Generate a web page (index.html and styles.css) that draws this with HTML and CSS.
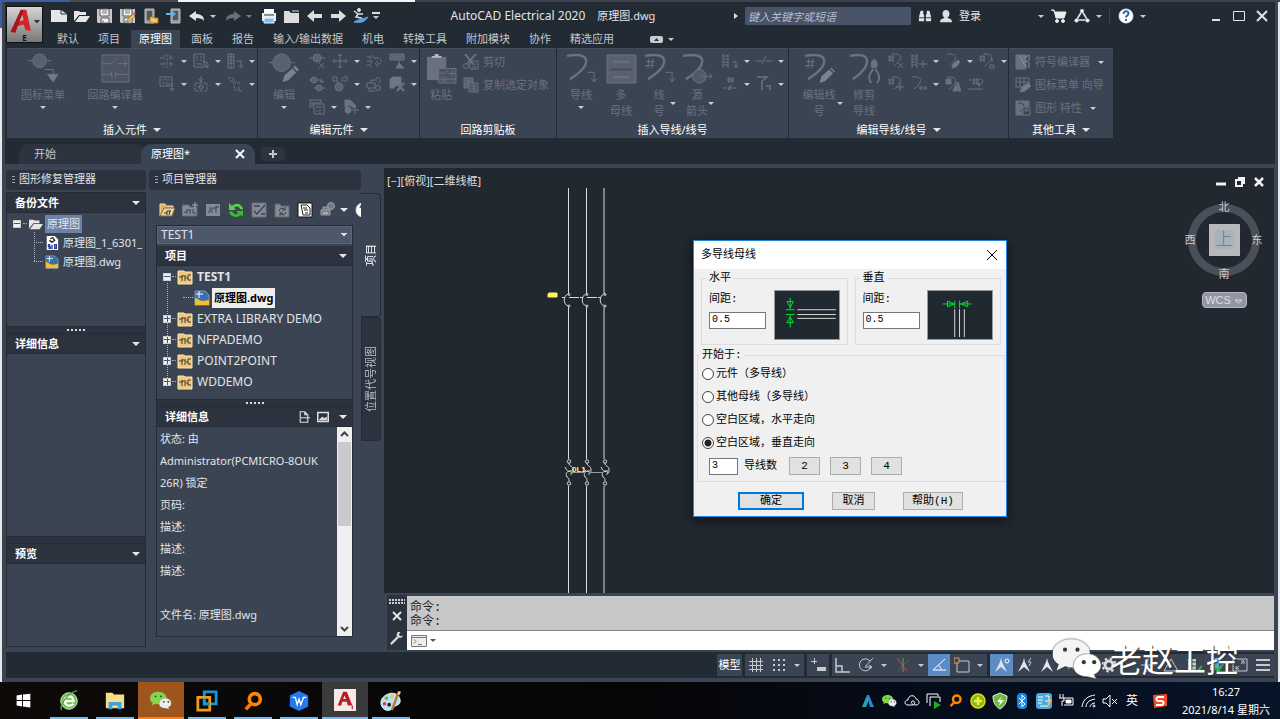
FILE: index.html
```html
<!DOCTYPE html>
<html lang="zh-CN">
<head>
<meta charset="utf-8">
<title>AutoCAD Electrical 2020 原理图.dwg</title>
<link rel="stylesheet" href="styles.css">
</head>
<body>
<svg class="sprite" aria-hidden="true">
  <symbol id="new" viewBox="0 0 16 16"><path d="M0 2h10l6 4v8H0z" fill="#e6e6e6" stroke="none"/><path d="M10 2v4h6" stroke="#222a33"/></symbol>
  <symbol id="open" viewBox="0 0 16 16"><path d="M0 13V3h5l1 1h6v3H5z M5.500 8H16l-4 6H1z" fill="#e6e6e6" stroke="none"/></symbol>
  <symbol id="save" viewBox="0 0 16 16"><path d="M0 1h15v14H1L0 14z" fill="#c9c9c9" stroke="none"/><path d="M3 1h9v7H3zM4 10h8v5H4z" fill="#f4f4f4" stroke="#555"/><path d="M5 3h5M5 5h5M6 12v3" stroke="#777"/></symbol>
  <symbol id="pencil" viewBox="0 0 16 16"><path d="M7 14l1-3 5-5 2 2-5 5z" fill="#f3bf55" stroke="#8a5a20" stroke-width=".6"/><path d="M13 5l2 2 1-2-1-1z" fill="#e33" stroke="none"/></symbol>
  <symbol id="device" viewBox="0 0 16 16"><path d="M2 1h9v14H2z" fill="#9a9a9a" stroke="#bbb"/><path d="M4 3h5v9H4z" fill="#555" stroke="none"/></symbol>
  <symbol id="undo" viewBox="0 0 16 16"><path d="M0 8l7-5v3c5 0 8 2 8 7-1-2-4-3-8-3v3z" fill="currentColor" stroke="none"/></symbol>
  <symbol id="print" viewBox="0 0 16 16"><path d="M3 1h10v5H3z" fill="#fff" stroke="none"/><path d="M1 5h14v8H1z" fill="#eee" stroke="none"/><path d="M3 7h10" stroke="#333"/><path d="M3 10h10v5H3z" fill="#7fc0ee" stroke="#e9f5ff"/></symbol>
  <symbol id="folder" viewBox="0 0 16 16"><path d="M0 3h5l2 2h8v10H0z" fill="#dcdcdc" stroke="none"/><path d="M8 3h7" stroke="#dcdcdc"/></symbol>
  <symbol id="arrow" viewBox="0 0 16 16"><path d="M0 8l7-6v4h8v4H7v4z" fill="#dedede" stroke="none"/></symbol>
  <symbol id="ski" viewBox="0 0 16 16"><circle cx="6" cy="2" r="1.500" fill="#ddd"/><path d="M1 3l4 3-2 3 5 1 3 2M5 6l5 0" stroke="#ddd" stroke-width="1.500"/><path d="M1 14c6 1 10 1 14-5-5 2-9 2-14 5z" fill="#5aa0d8" stroke="#5aa0d8"/></symbol>
  <symbol id="binoc" viewBox="0 0 16 16"><path d="M3 2h3v3l1 2v7H1V9zM10 2h3l2 7v5H9V7l1-2z" fill="#e4e4e4" stroke="none"/><path d="M1 10h6M9 10h6" stroke="#222a33"/></symbol>
  <symbol id="person" viewBox="0 0 16 16"><path d="M8 1c5 0 5 7 1.500 9l4.500 2 1 3H1l1-3 4.500-2C3 8 3 1 8 1z" fill="#dedede" stroke="none"/></symbol>
  <symbol id="cart" viewBox="0 0 16 16"><path d="M0 2h3l2 8h8l2-6H4" fill="#eee" stroke="#eee"/><circle cx="6" cy="13" r="1.500" fill="#eee"/><circle cx="12" cy="13" r="1.500" fill="#eee"/></symbol>
  <symbol id="tri" viewBox="0 0 16 16"><path d="M8 3L2.500 12h11z" stroke="#dfe4f5" stroke-width="1.600"/><g fill="#fff" stroke="#5363a8" stroke-width=".5"><circle cx="8" cy="3" r="2"/><circle cx="2.500" cy="12.500" r="2"/><circle cx="13.500" cy="12.500" r="2"/></g></symbol>

  <symbol id="comp" viewBox="0 0 32 32"><circle cx="12" cy="8" r="7" fill="#596170"/><path d="M0 8h5M19 8h5M17 17h9v8"/><path d="M20 22h11l-5 8z" fill="#737b88"/></symbol>
  <symbol id="circuit" viewBox="0 0 32 32"><path d="M2 2h28v28H2z" fill="#4c5462"/><path d="M2 11h10l6-6M18 11h12M26 8v6M2 22h10M12 19v6M16 19v6M16 22h14"/></symbol>
  <symbol id="edit" viewBox="0 0 32 32"><circle cx="13" cy="10" r="9" fill="#596170"/><path d="M0 10h4M22 10h5"/><path d="M14 30l2-7 8-7 4 4-8 8zM25 15l2-2 4 4-2 2z" fill="#7a828e" stroke="none"/></symbol>
  <symbol id="paste" viewBox="0 0 32 32"><path d="M1 4h20v24H1z" fill="#6a717d" stroke="none"/><path d="M6 5V3h3V1h4v2h3v2z" fill="#b8bcc2" stroke="none"/><path d="M13 16h18v15H13z" fill="#4b5361"/><path d="M13 21h6l4-3M23 21h8M27 18v5M13 27h5M18 25v5M20 25v5M20 27h11"/></symbol>
  <symbol id="wire" viewBox="0 0 32 32"><path d="M1 3c28-5 24 11 3 24" stroke-width="2.500"/><path d="M22 20h7v9M26 26l3 4 3-4"/></symbol>
  <symbol id="bus" viewBox="0 0 32 32"><path d="M1 2h30v29H1z" fill="#596170"/><path d="M8 9h16M8 25h16" stroke-width="2"/><path d="M5 17h22" stroke="#454d5b" stroke-width="2"/></symbol>
  <symbol id="wnum" viewBox="0 0 32 32"><path d="M1 3c28-5 24 11 3 24" stroke-width="2.500"/><path d="M2 9h9M1 13h9M5 6l-1 10M9 6l-1 10M22 20h7v9M26 26l3 4 3-4"/></symbol>
  <symbol id="source" viewBox="0 0 32 32"><path d="M1 3c28-5 24 11 3 24" stroke-width="2.500"/><circle cx="18" cy="24" r="7" fill="#535b69"/><path d="M20 24h11M28 21l3 3-3 3"/></symbol>
  <symbol id="wedit" viewBox="0 0 32 32"><path d="M1 3c28-5 24 11 3 24" stroke-width="2.500"/><path d="M2 9h9M1 13h9M5 6l-1 10M9 6l-1 10"/><path d="M16 31l2-7 8-7 4 4-8 8zM27 16l1-1 4 4-1 1z" fill="#7a828e" stroke="none"/></symbol>
  <symbol id="trim" viewBox="0 0 32 32"><path d="M1 3c24-5 22 11 3 24" stroke-width="2.500"/><path d="M25 16c-2-3-2-6 0-8v6h2V8c2 2 2 5 0 8M25 17c-5 5-5 10-2 14M27 17c5 5 5 10 2 14" stroke-width="2"/></symbol>

  <symbol id="s1" viewBox="0 0 16 16"><path d="M1 5h4M11 5h4M1 11h4M11 11h4M5 2v5M5 9v5M11 2v5M11 9v5M8 1v14" stroke-dasharray="3 1"/></symbol>
  <symbol id="s2" viewBox="0 0 16 16"><path d="M1 1h10v13H1zM3 4h2M7 4h2M3 7h2M7 7h2M3 11h6M10 9h4v5M12 12l2 3 2-3"/></symbol>
  <symbol id="s3" viewBox="0 0 16 16"><path d="M1 1h6v14H1zM1 4h6M1 7h6M1 10h6M4 1v14M9 8h5v5M12 12l2 3 2-3"/></symbol>
  <symbol id="s4" viewBox="0 0 16 16"><path d="M1 1h12v9H1zM3 4h2l2-2M7 4h4M3 7h3M8 6v3M9 8h4v6M11 12l2 3 2-3"/></symbol>
  <symbol id="s5" viewBox="0 0 16 16"><path d="M8 0v5M6 3l2 3 2-3"/><path d="M2 7h12v8H2zM5 11h6" stroke-dasharray="3 1"/><circle cx="8" cy="11" r="2"/></symbol>
  <symbol id="s6" viewBox="0 0 16 16"><path d="M1 2h5l3 5h5M3 5h3l2 9h3M12 11v4h4" stroke-dasharray="3 1"/></symbol>
  <symbol id="s7" viewBox="0 0 16 16"><circle cx="8" cy="5" r="4" fill="#596170"/><path d="M0 5h4M12 5h4M10 10l5 5M15 10l-5 5"/></symbol>
  <symbol id="s8" viewBox="0 0 16 16"><path d="M8 1v14M1 8h14M6 3l2-2 2 2M6 13l2 2 2-2M3 6L1 8l2 2M13 6l2 2-2 2"/></symbol>
  <symbol id="s9" viewBox="0 0 16 16"><path d="M1 4h3M1 8h3M1 12h3M5 2v12M9 5h4c3 0 3 6 0 6h-2M12 8l-3 3 3 3M7 3l3 4" stroke-dasharray="4 1"/></symbol>
  <symbol id="s10" viewBox="0 0 16 16"><path d="M1 1h14v6H1z" fill="#59616e"/><path d="M3 4h10M10 8v7M7 15l3-5 5 5z" fill="#737b87"/></symbol>
  <symbol id="s11" viewBox="0 0 16 16"><circle cx="5" cy="4" r="3" fill="#596170"/><circle cx="10" cy="12" r="3" fill="#596170"/><path d="M0 4h2M8 4h5v3M5 12h2M13 12h3M11 5l2 2 2-2"/></symbol>
  <symbol id="s12" viewBox="0 0 16 16"><circle cx="7" cy="11" r="4" fill="#596170"/><path d="M1 1h4v4H1zM5 5l2 2M9 5l3-4M12 1h3v4M11 5h3"/></symbol>
  <symbol id="s13" viewBox="0 0 16 16"><path d="M1 7h8v5H1zM5 7V4h6M10 2c5-2 6 5 2 5M3 12v3h6"/><circle cx="12" cy="12" r="2.500"/></symbol>
  <symbol id="s14" viewBox="0 0 16 16"><path d="M1 3l3-2h8v8H8l-3 3H1z" fill="#707884"/><path d="M8 8l7 7M15 7l-7 8" stroke-width="2"/></symbol>
  <symbol id="s15" viewBox="0 0 16 16"><path d="M1 9V1h11v3M3 3v5M3 4h8M5 5h10v10H5zM7 8h6M7 12h2M11 10v4"/></symbol>
  <symbol id="s16" viewBox="0 0 16 16"><path d="M2 1h5l6 6-2 2-6-4v3H2z" fill="#6b7380"/><circle cx="5" cy="11" r="3" fill="#6b7380"/><path d="M5 13v3M8 11h8M12 7v8"/></symbol>
  <symbol id="cut" viewBox="0 0 16 16"><path d="M2 0l8 10M13 0L5 9" stroke-width="2"/><circle cx="3" cy="12" r="2.500"/><path d="M7 7h8v8H7zM9 10h4M9 13h4"/></symbol>
  <symbol id="copy" viewBox="0 0 16 16"><path d="M1 1h9v10H1zM3 4h5M3 7h5" fill="#596170"/><path d="M6 6h9v9H6zM8 9h5M8 12h5M11 7v8" fill="#4a5260"/></symbol>
  <symbol id="ladder" viewBox="0 0 16 16"><path d="M1 1v14M6 1v14M1 3h5M1 6h5M1 9h5M1 12h5M10 9h4v5M12 12l2 3 2-3"/></symbol>
  <symbol id="ladderp" viewBox="0 0 16 16"><path d="M1 1v14M6 1v14M1 3h5M1 6h5M1 9h5M1 12h5M8 11h8M12 7v8"/></symbol>
  <symbol id="gap" viewBox="0 0 16 16"><path d="M0 8h6M10 8h6M6 11l4-8"/></symbol>
  <symbol id="hash" viewBox="0 0 16 16"><path d="M7 1v6M10 1v6M5 3h7M5 5h7M1 12h4M11 12h4M6 14l4-5"/><circle cx="8" cy="12" r="1.500"/></symbol>
  <symbol id="bend" viewBox="0 0 16 16"><path d="M1 1h10L6 5v9M10 10h4v4" stroke-width="1.500"/></symbol>
  <symbol id="n1" viewBox="0 0 16 16"><path d="M4 1c12-1 10 6 2 12M0 4h6M0 7h6M2 2v7M5 2v7M10 10l5 5M15 10l-5 5"/></symbol>
  <symbol id="n2" viewBox="0 0 16 16"><path d="M2 1c12-1 10 6 2 12"/><path d="M7 15l1-4 5-4 2 2-4 5z" fill="#737b87"/></symbol>
  <symbol id="n3" viewBox="0 0 16 16"><path d="M4 1c12-1 10 6 2 12M0 4h6M0 7h6M2 2v7M5 2v7M13 5v4M11 12h4v3h-4z"/></symbol>
  <symbol id="n4" viewBox="0 0 16 16"><path d="M4 1c12-1 10 6 2 12M0 4h6M0 7h6M2 2v7M5 2v7M8 11h8M12 7v8"/></symbol>
  <symbol id="n5" viewBox="0 0 16 16"><path d="M1 1c12-1 10 6 2 12M9 12h6M13 10l3 2-3 2M11 10l-3 2 3 2"/></symbol>
  <symbol id="n6" viewBox="0 0 16 16"><path d="M2 1c12-1 10 6 2 12"/><path d="M1 3h5v5H1zM8 15l4-9v9zM13 6v9h3z" fill="#69717d"/></symbol>
  <symbol id="n7" viewBox="0 0 16 16"><path d="M4 4h7M4 7h7M6 2v7M9 2v7M0 13h15M1 4h2M11 3c5 0 5 5 0 6M12 7l-2 2 2 2"/></symbol>
  <symbol id="t1" viewBox="0 0 16 16"><path d="M1 1h10v14H1z" fill="#69717d"/><path d="M4 1l7 12M9 4l5-3v6M8 10c0-4 6-4 6 0v4" stroke="#8b919b"/></symbol>
  <symbol id="t2" viewBox="0 0 16 16"><path d="M1 1h13v9H1zM1 5h13M5 1v9M9 1v9"/><path d="M5 15l2-5 6-4 3 3-6 5z" fill="#737b87"/></symbol>
  <symbol id="t3" viewBox="0 0 16 16"><path d="M1 1h13v14H1z" fill="#69717d"/><path d="M3 3c7 0 8 3 2 9" stroke="#3b4453"/><path d="M8 7h7v8H8zM10 9h3v2h-3z" fill="#3b4453"/></symbol>

  <symbol id="dwg" viewBox="0 0 16 16"><path d="M1 1h10l4 4v10H1z" fill="#3970ac" stroke="#91b6d8" stroke-width=".7"/><path d="M1 15V8c3 0 4 3 8 3l6-1v5z" fill="#f5be2b" stroke="none"/><path d="M5 1v7M2 4h7" stroke="#fff"/></symbol>
  <symbol id="bak" viewBox="0 0 16 16"><path d="M2 0h9l4 4v12H2z" fill="#fff" stroke="none"/><path d="M6 3l3-1 2 3-3 2-3-2" stroke="#222" stroke-width="1.500"/><path d="M6 10H4v2h2v2H4M8 10v5M11 10h2v4h-2z" stroke="#283c99" stroke-width="1.500"/></symbol>
  <symbol id="proj" viewBox="0 0 16 16"><path d="M1 2h6l1 1h7v12H1z" fill="#eec881" stroke="#ffe5b0"/><path d="M2 8h3M5 6v6M5 7h4M8 7v5M11 6h3M11 6v5h3M9 9h2" stroke="#443824"/></symbol>
  <symbol id="tool" viewBox="0 0 16 16"><path d="M0 3h7l1 2h7v9H0z" fill="#858b93" stroke="#606671"/><path d="M2 10h3M5 7v5M5 8h4M8 8v4M11 7v4h3" stroke="#3b4453"/></symbol>
  <symbol id="openp" viewBox="0 0 16 16"><path d="M1 14V2h5l1 2h7v3" fill="#d5b477" stroke="#ffdda0"/><path d="M1 14l4-8h11l-3 8z" fill="#f0d2a0" stroke="#7b684c"/><path d="M5 11h3M8 9v4M8 9h4M11 9l-1 4" stroke="#3c3326"/></symbol>
  <symbol id="refresh" viewBox="0 0 16 16"><path d="M1 8V1l3 3c5-5 11-1 11 4l-3-1c-1-3-4-3-6-1l2 2z" fill="#55d347" stroke="none"/><path d="M15 9v6l-2-2C8 17 2 14 1 10l3-1c2 4 5 4 6 2l-2-2z" fill="#36bb33" stroke="none"/></symbol>
  <symbol id="doc" viewBox="0 0 16 16"><path d="M1 1h14v14H1z" fill="#fff" stroke="#111"/><path d="M4 3h6l3 3v7H6zM6 6h4M7 8h4M8 11h3" stroke="#222"/></symbol>
  <symbol id="plot" viewBox="0 0 16 16"><path d="M1 8h9v5H1zM3 8V5h6v3" fill="#747b84" stroke="#9b9fa6"/><circle cx="11" cy="4" r="3.500" fill="#747b84" stroke="#9b9fa6"/><path d="M3 11h5" stroke="#ddd"/></symbol>
  <symbol id="help" viewBox="0 0 16 16"><circle cx="8" cy="8" r="7" fill="#fff" stroke="#dce4f2"/><path d="M5.500 6c0-4 5-3 5-.5 0 2-2.500 2-2.500 4M8 11v2" stroke="#3463ad" stroke-width="2"/></symbol>
  <symbol id="wrench" viewBox="0 0 16 16"><path d="M1 15l8-8" stroke="#ddd" stroke-width="2.500"/><path d="M9 1c-2 2-2 5 0 6s5 1 6-2l-3 1-2-2 2-3z" fill="#ddd" stroke="none"/></symbol>

  <symbol id="grid" viewBox="0 0 16 16"><path d="M4.500 1v14M8.500 1v14M12.500 1v14M1 4.500h14M1 8.500h14M1 12.500h14"/></symbol>
  <symbol id="dots" viewBox="0 0 16 16"><path d="M2 3h13M2 8h13M2 13h13" stroke-width="2" stroke-dasharray="2 3"/></symbol>
  <symbol id="dyn" viewBox="0 0 16 16"><path d="M1 4.500h6M4.500 1v6"/><path d="M7 10h9v4H7z" fill="#ccc" stroke="none"/></symbol>
  <symbol id="ortho" viewBox="0 0 16 16"><path d="M1 1v14h14M1 9h6v6" stroke-width="1.500"/></symbol>
  <symbol id="polar" viewBox="0 0 16 16"><path d="M12 4a6 6 0 1 0 1 6H7l8-9"/><path d="M11 8l3 2-3 2"/></symbol>
  <symbol id="iso" viewBox="0 0 16 16"><path d="M2 1l10 13" stroke="#d44"/><path d="M8 1v14" stroke="#5aa25d"/><path d="M14 3L8 8l-5 6" stroke="#7a6d6d" stroke-width=".6"/></symbol>
  <symbol id="angle" viewBox="0 0 16 16"><path d="M14 2L2 13h13M7 8c2 1 3 3 3 5"/></symbol>
  <symbol id="osnap" viewBox="0 0 16 16"><path d="M3 4h12v11H3z"/><path d="M0 1h5v5H0z" stroke="#e49a60" fill="#3b4453"/></symbol>
  <symbol id="anno" viewBox="0 0 16 16"><path d="M7 1l1 4 5 10-6-5-6 5 5-10z" fill="#e1e4e8" stroke="none"/></symbol>
  <symbol id="gear" viewBox="0 0 16 16"><circle cx="8" cy="8" r="4" stroke="#ddd" stroke-width="3"/><circle cx="8" cy="8" r="6.500" stroke="#ddd" stroke-width="2" stroke-dasharray="2.500 2.600"/></symbol>
  <symbol id="cyl" viewBox="0 0 16 16"><path d="M2 2h8v11H2z" fill="#ccc" stroke="none"/><path d="M2 5h8M2 9h8" stroke="#444"/><path d="M8 12l3 3 5-6" stroke="#31b545" stroke-width="2"/></symbol>
  <symbol id="ok" viewBox="0 0 16 16"><path d="M2 1h8v11H2z" fill="#5aa4dc" stroke="none"/><path d="M1 8h4v5H1z" fill="#f0c040" stroke="none"/><path d="M6 11l3 3 6-9" stroke="#2dae48" stroke-width="2.500"/></symbol>
  <symbol id="expand" viewBox="0 0 16 16"><path d="M1 2h14v12H1zM9 7l3-3M9 4h3v3M7 9l-3 3M4 9v3h3"/></symbol>

  <symbol id="win" viewBox="0 0 24 24"><path d="M5 6l6-1v6H5zM12 5l8-1v7h-8zM5 12h6v6l-6-1zM12 12h8v7l-8-1z" fill="#fff" stroke="none"/></symbol>
  <symbol id="browser" viewBox="0 0 24 24"><circle cx="12" cy="12" r="9" fill="#67c447" stroke="#dff6d6"/><path d="M17 12H7c0-6 9-7 10 0zM7 13c2 5 7 5 10 2" stroke="#fff" stroke-width="2.500"/><path d="M4 22c-3-5 7-20 17-21" stroke="#48a928" stroke-width="1.500"/></symbol>
  <symbol id="explorer" viewBox="0 0 24 24"><path d="M2 3h7l2 2h11v15H2z" fill="#f8dc87" stroke="none"/><path d="M5 21v-8h14v8h-4v-4H9v4z" fill="#3ba4df" stroke="none"/></symbol>
  <symbol id="wechat" viewBox="0 0 24 24"><path d="M9 3c-5 0-9 3-9 7 0 2 1 4 3 5l-1 3 4-2c7 2 12-1 12-6 0-4-4-7-9-7z" fill="var(--bubble-a)" stroke="none"/><path d="M17 10c-4 0-7 2-7 6 0 3 3 5 7 5l4 1-1-2c6-3 3-10-3-10z" fill="var(--bubble-b)" stroke="#5557" stroke-width=".5"/><g fill="#274127" stroke="none"><circle cx="6" cy="8" r="1"/><circle cx="12" cy="8" r="1"/><circle cx="15" cy="14" r="1"/><circle cx="20" cy="14" r="1"/></g></symbol>
  <symbol id="vm" viewBox="0 0 24 24"><path d="M9 2h13v13H9z" stroke="#1299da" stroke-width="3"/><path d="M2 8h13v14H2z" stroke="#f39a16" stroke-width="3"/><path d="M9 9v6h6" stroke="#1299da" stroke-width="3"/></symbol>
  <symbol id="search" viewBox="0 0 24 24"><circle cx="14" cy="10" r="6" stroke="#ff8500" stroke-width="4"/><path d="M10 15l-6 6" stroke="#ff7600" stroke-width="4"/></symbol>
  <symbol id="wps" viewBox="0 0 24 24"><path d="M12 1l10 5v12l-10 5-10-5V6z" fill="#2678ef" stroke="none"/><path d="M5 8h3l2 8 2-6 2 6 3-8h3" stroke="#fff" stroke-width="1.500"/></symbol>
  <symbol id="acad" viewBox="0 0 24 24"><path d="M0 0h24v24H0z" fill="#f9e9e5" stroke="none"/><path d="M4 18L10 3h4l6 15h-5l-1-4H9l-1 4zM10 11h3l-1.500-4z" fill="#b51f29" fill-rule="evenodd" stroke="none"/><path d="M20 18v4" stroke="#d24" stroke-width="1.500"/></symbol>
  <symbol id="paint" viewBox="0 0 24 24"><path d="M10 4C3 6-1 12 2 18s10 5 13 1c2-3 7-2 7-7 0-6-6-10-12-8z" fill="#b9dff1" stroke="#eaf8ff"/><g stroke="none"><circle cx="5" cy="15" r="2" fill="#e34"/><circle cx="7" cy="9" r="2" fill="#61b94d"/><circle cx="13" cy="7" r="2" fill="#f7ca38"/><circle cx="10" cy="16" r="2" fill="#222"/></g><path d="M13 22L20 3" stroke="#b97635" stroke-width="2.500"/><path d="M19 4l1-3 3 1-2 4z" fill="#f5cc8d" stroke="none"/></symbol>
</svg>

<div class="app">
  <header class="top">
    <button class="logo" aria-label="应用程序菜单">
      <svg viewBox="0 0 38 38"><path d="M4 27L15 3h6l5 23-6-1-2-6-7 2-2 7zM13 16l5-2-2-7z" fill="#d2262d" fill-rule="evenodd"/><path d="M4 27L15 3l3 1-9 24z" fill="#a9141c"/><path d="M29 14h7l-3.500 4z" fill="#34383f"/></svg>
      <b>E</b>
    </button>
    <div class="bars">
      <div class="titlebar">
        <div class="quick">
          <button><svg class="i"><use href="#new"/></svg></button><button><svg class="i"><use href="#open"/></svg></button><button><svg class="i"><use href="#save"/></svg></button>
          <button><svg class="i"><use href="#save"/><use href="#pencil"/></svg></button>
          <button><svg class="i"><use href="#device"/><path d="M7 15V9h3l1 1h4v5z" fill="#f5c76c" stroke="#a9782c"/></svg></button>
          <button><svg class="i"><use href="#device" x="3"/><path d="M0 5h5V2l5 4-5 4V7H0z" fill="#61b5ed" stroke="none"/></svg></button>
          <button><svg class="i lit"><use href="#undo"/></svg></button><i class="caret slim"></i>
          <button class="flip"><svg class="i dim"><use href="#undo"/></svg></button><i class="caret slim dim"></i>
          <button><svg class="i"><use href="#print"/></svg></button><button><svg class="i"><use href="#folder"/></svg></button><button><svg class="i"><use href="#arrow"/></svg></button><button class="flip"><svg class="i"><use href="#arrow"/></svg></button><button><svg class="i"><use href="#ski"/></svg></button>
          <button class="custom" aria-label="自定义"><i class="caret"></i></button>
        </div>
        <h1><span>AutoCAD Electrical 2020</span><span>原理图.dwg</span></h1>
        <div class="info">
          <i class="play"></i>
          <input class="find" type="search" placeholder="键入关键字或短语" aria-label="搜索">
          <button><svg class="i small"><use href="#binoc"/></svg></button>
          <button class="login"><svg class="i small"><use href="#person"/></svg>登录</button>
          <i class="caret"></i>
          <button><svg class="i"><use href="#cart"/></svg></button>
          <button><svg class="i"><use href="#tri"/></svg><i class="caret"></i></button>
          <button class="helpbtn"><svg class="i"><use href="#help"/></svg><i class="caret"></i></button>
        </div>
        <div class="winctl">
          <button aria-label="最小化"><svg class="i"><path d="M4 12h8" stroke-width="2"/></svg></button>
          <button aria-label="最大化"><svg class="i"><path d="M2.500 3.500h11v9h-11z"/></svg></button>
          <button aria-label="关闭"><svg class="i"><path d="M3 3l10 10M13 3L3 13" stroke-width="2"/></svg></button>
        </div>
      </div>
      <nav class="tabs">
        <button>默认</button><button>项目</button><button class="on">原理图</button><button>面板</button><button>报告</button><button>输入/输出数据</button><button>机电</button><button>转换工具</button><button>附加模块</button><button>协作</button><button>精选应用</button>
        <button class="mini" aria-label="最小化功能区"><svg width="13" height="7"><rect width="13" height="7" rx="2" fill="#c9ccd0"/><path d="M4 5h5L6.500 2z" fill="#333"/></svg><i class="caret"></i></button>
      </nav>
    </div>
  </header>

  <div class="ribbon">
    <section class="panel p1">
      <div class="tools">
        <button class="big"><svg class="i xl"><use href="#comp"/></svg>图标菜单<i class="caret"></i></button>
        <button class="big wide"><svg class="i xl"><use href="#circuit"/></svg>回路编译器<i class="caret"></i></button>
        <div class="rows">
          <div><button class="dd"><svg class="i"><use href="#s1"/></svg></button><button class="dd"><svg class="i"><use href="#s2"/></svg></button><button class="dd"><svg class="i"><use href="#s3"/></svg></button></div>
          <div><button class="dd"><svg class="i"><use href="#s4"/></svg></button><button class="dd"><svg class="i"><use href="#s5"/></svg></button><button class="dd"><svg class="i"><use href="#s6"/></svg></button></div>
        </div>
      </div>
      <button class="cap">插入元件<i class="caret big-caret"></i></button>
    </section>
    <section class="panel p2">
      <div class="tools">
        <button class="big narrow"><svg class="i xl"><use href="#edit"/></svg>编辑<i class="caret"></i></button>
        <div class="rows">
          <div><button><svg class="i"><use href="#s7"/></svg></button><button class="dd"><svg class="i"><use href="#s8"/></svg></button><button><svg class="i"><use href="#s9"/></svg></button><button class="dd"><svg class="i"><use href="#s10"/></svg></button></div>
          <div><button><svg class="i"><use href="#s11"/></svg></button><button class="dd"><svg class="i"><use href="#s12"/></svg></button><button><svg class="i"><use href="#s13"/></svg></button><button class="dd"><svg class="i"><use href="#s14"/></svg></button></div>
          <div><button class="dd"><svg class="i"><use href="#s15"/></svg></button><button class="dd"><svg class="i"><use href="#s16"/></svg></button></div>
        </div>
      </div>
      <button class="cap">编辑元件<i class="caret big-caret"></i></button>
    </section>
    <section class="panel p3">
      <div class="tools">
        <button class="big narrow"><svg class="i xl"><use href="#paste"/></svg>粘贴</button>
        <div class="rows">
          <div><button class="word"><svg class="i"><use href="#cut"/></svg>剪切</button></div>
          <div><button class="word"><svg class="i"><use href="#copy"/></svg>复制选定对象</button></div>
        </div>
      </div>
      <button class="cap">回路剪贴板</button>
    </section>
    <section class="panel p4">
      <div class="tools">
        <button class="big narrow"><svg class="i xl"><use href="#wire"/></svg>导线<i class="caret"></i></button>
        <button class="big slim"><svg class="i xl"><use href="#bus"/></svg>多<br>母线</button>
        <button class="big slim side"><svg class="i xl"><use href="#wnum"/></svg>线<br>号</button>
        <button class="big slim side"><svg class="i xl"><use href="#source"/></svg>源<br>箭头</button>
        <div class="rows">
          <div><button class="dd"><svg class="i"><use href="#ladder"/></svg></button><button class="dd"><svg class="i"><use href="#gap"/></svg></button></div>
          <div><button class="dd"><svg class="i"><use href="#hash"/></svg></button><button class="dd"><svg class="i"><use href="#bend"/></svg></button></div>
        </div>
      </div>
      <button class="cap">插入导线/线号</button>
    </section>
    <section class="panel p5">
      <div class="tools">
        <button class="big side mid"><svg class="i xl"><use href="#wedit"/></svg>编辑线<br>号</button>
        <button class="big slim"><svg class="i xl"><use href="#trim"/></svg>修剪<br>导线</button>
        <div class="rows">
          <div><button><svg class="i"><use href="#n1"/></svg></button><button class="dd"><svg class="i"><use href="#ladderp"/></svg></button><button class="dd"><svg class="i"><use href="#n2"/></svg></button><button class="dd"><svg class="i"><use href="#n3"/></svg></button></div>
          <div><button><svg class="i"><use href="#n4"/></svg></button><button class="dd"><svg class="i"><use href="#n5"/></svg></button><button><svg class="i"><use href="#n6"/></svg></button><button><svg class="i"><use href="#n7"/></svg></button></div>
        </div>
      </div>
      <button class="cap">编辑导线/线号<i class="caret big-caret"></i></button>
    </section>
    <section class="panel p6">
      <div class="tools">
        <div class="rows">
          <div><button class="word"><svg class="i"><use href="#t1"/></svg>符号编译器<i class="caret"></i></button></div>
          <div><button class="word"><svg class="i"><use href="#t2"/></svg>图标菜单 向导</button></div>
          <div><button class="word"><svg class="i"><use href="#t3"/></svg>图形 特性<i class="caret"></i></button></div>
        </div>
      </div>
      <button class="cap">其他工具<i class="caret big-caret"></i></button>
    </section>
  </div>

  <nav class="files">
    <button>开始</button><button class="on">原理图*<svg class="i tiny"><path d="M1 1l8 8M9 1L1 9" stroke-width="2"/></svg></button><button class="add" aria-label="新建"><svg class="i tiny"><path d="M1 5h8M5 1v8" stroke-width="2"/></svg></button>
  </nav>

  <main>
    <aside class="dock">
      <h2 class="grip">图形修复管理器</h2>
      <div class="stack">
        <h3>备份文件<i class="caret big-caret"></i></h3>
        <ul class="backup">
          <li><i class="box minus"></i><i class="stub"></i><svg class="i small"><use href="#open"/></svg><span class="sel">原理图</span></li>
          <li class="sub"><i class="stub"></i><svg class="i small"><use href="#bak"/></svg><span>原理图_1_6301_</span></li>
          <li class="sub"><i class="stub"></i><svg class="i small"><use href="#dwg"/></svg><span>原理图.dwg</span></li>
        </ul>
        <div class="split dotted"></div>
        <h3>详细信息<i class="caret big-caret"></i></h3>
        <div class="fill"></div>
        <div class="split"></div>
        <h3>预览<i class="caret big-caret"></i></h3>
        <div class="preview"></div>
      </div>
    </aside>
    <aside class="dock wide-dock">
      <h2 class="grip">项目管理器</h2>
      <div class="palette">
        <div class="ptools">
          <button><svg class="i"><use href="#openp"/></svg></button><button><svg class="i"><use href="#tool"/><path d="M13 0v6M10 3h6" stroke="#aaa"/></svg></button><button><svg class="i small"><path d="M0 1h14v12H0z" fill="#858b93" stroke="none"/><path d="M2 9h2V4M6 10V5h4M10 3v7M10 4h3" stroke="#3b4453"/></svg></button><button><svg class="i"><use href="#refresh"/></svg></button><button><svg class="i dim"><path d="M1 1h14v14H1z" fill="#858b93"/><path d="M3 9l3 3 8-9M3 4h6M10 12h4" stroke="#3b4453" stroke-width="1.500"/></svg></button><button><svg class="i"><path d="M1 2h5l1 2h8v11H1z" fill="#858b93" stroke="#606671"/><path d="M5 9c1-4 5-3 6-1M11 5v3H8M12 10c-1 4-5 3-6 1M6 14v-3h3" stroke="#333c49"/></svg></button><button><svg class="i"><use href="#doc"/></svg></button><button><svg class="i"><use href="#plot"/></svg></button><i class="caret big-caret"></i><button class="half"><svg class="i"><use href="#help"/></svg></button>
        </div>
        <div class="stack">
          <select class="combo" aria-label="当前项目"><option>TEST1</option></select>
          <h3>项目<i class="caret big-caret"></i></h3>
          <ul class="projects">
            <li><i class="box minus"></i><i class="stub"></i><svg class="i"><use href="#proj"/></svg><b>TEST1</b></li>
            <li class="sub"><i class="stub"></i><svg class="i"><use href="#dwg"/></svg><b class="sel">原理图.dwg</b></li>
            <li><i class="box"></i><i class="stub"></i><svg class="i"><use href="#proj"/></svg><span>EXTRA LIBRARY DEMO</span></li>
            <li><i class="box"></i><i class="stub"></i><svg class="i"><use href="#proj"/></svg><span>NFPADEMO</span></li>
            <li><i class="box"></i><i class="stub"></i><svg class="i"><use href="#proj"/></svg><span>POINT2POINT</span></li>
            <li><i class="box"></i><i class="stub"></i><svg class="i"><use href="#proj"/></svg><span>WDDEMO</span></li>
          </ul>
          <div class="split dotted"></div>
          <h3>详细信息<svg class="i mini-ic" viewBox="0 0 16 16"><path d="M3 1h6l4 4v10H3zM4 9h12M9 1v4h4" stroke-width="1.500"/></svg><svg class="i mini-ic" viewBox="0 0 16 16"><path d="M1 2h14v12H1z" stroke-width="2"/><path d="M3 12l4-4 3 2 3-2v4z" fill="#ddd"/></svg><i class="caret big-caret"></i></h3>
          <div class="details">
            <p>状态: 由<br>Administrator(PCMICRO-8OUK<br>26R) 锁定<br>页码:<br>描述:<br>描述:<br>描述:<br><br>文件名: 原理图.dwg</p>
            <div class="scroll"><svg viewBox="0 0 15 15"><path d="M4 9l3.500-3.500L11 9"/></svg><i></i><svg viewBox="0 0 15 15"><path d="M4 6l3.500 3.500L11 6"/></svg></div>
          </div>
        </div>
      </div>
    </aside>
    <nav class="sidetabs"><button class="on"><span>项目</span></button><button><span>位置代号视图</span></button></nav>

    <div class="work">
      <div class="canvas">
        <svg class="drawing" fill="none" stroke="#d9dbdd">
          <g><path d="M184.500 20v106M184.500 139v152M202.500 20v106M202.500 139v152M220 20v106M220 139v152"/></g>
          <line x1="184.500" y1="318" x2="184.500" y2="100%"/><line x1="202.500" y1="318" x2="202.500" y2="100%"/><line x1="220" y1="318" x2="220" y2="100%"/>
          <g id="contact"><circle cx="185" cy="126.500" r="1"/><path d="M184 126c-5 2-5 10 0 12M178 129.500h3"/><circle cx="185" cy="138" r="1"/></g><use href="#contact" x="18"/><use href="#contact" x="36"/>
          <path d="M185 129.500h10M203 129.500h10"/>
          <g id="overload"><circle cx="185" cy="293.500" r="1.700"/><path d="M185 295c0 4 4 2 4 7s-3 4-3 4M181 299c3 7 6 3 7 6M188 303c-5-1-7 3-5 6 2 1 2 2 2 4"/><circle cx="185" cy="315.500" r="1.700"/></g><use href="#overload" x="18"/><use href="#overload" x="36"/>
          <path d="M188 304.500h12M205 304.500h14" stroke="#969a9e"/>
          <path d="M165 125h8v4h-9v-3z" fill="#fff45c" stroke="#fff45c"/>
          <text x="188" y="304" class="tag">0L1</text>
        </svg>
        <div class="viewlabel">[−][俯视][二维线框]</div>
        <div class="mdi"><svg class="i small"><path d="M2 9h10" stroke-width="3"/></svg><svg class="i small"><path d="M3 5h6v6H3zM5 3h6v6" stroke-width="2"/></svg><svg class="i small"><path d="M3 3l8 8M11 3l-8 8" stroke-width="2.500"/></svg></div>
        <div class="cube">
          <svg viewBox="0 0 80 84"><circle cx="40" cy="42" r="32" fill="none" stroke="#4a4f59" stroke-width="8"/><path d="M25 26h31v32H25z" fill="#b6b8ba"/><path d="M31 32h19v19H31z" fill="#a9b1bd"/><g fill="#cbcdd0" font-size="11" text-anchor="middle"><text x="40" y="13">北</text><text x="6" y="46">西</text><text x="73" y="46">东</text><text x="40" y="80">南</text></g><text x="40" y="47" font-size="17" font-weight="300" text-anchor="middle" fill="#6b7584">上</text></svg>
          <button>WCS <svg width="9" height="5"><path d="M1 1h7L4.500 4z" fill="none" stroke="#d5d7de"/></svg></button>
        </div>

        <form class="dialog">
          <header><span>多导线母线</span><button type="button" aria-label="关闭"><svg class="i"><path d="M3 3l10 10M13 3L3 13"/></svg></button></header>
          <div class="dbody">
            <div class="pair">
              <fieldset><legend>水平</legend><label>间距:<input value="0.5"></label><svg class="thumb" viewBox="0 0 66 50"><g stroke="#00e62b" fill="none"><path d="M15.500 7v12M12 11h7l-3.500 6zM11 19.500h9M11 24.500h9M15.500 25v13M12 33h7l-3.500-6z"/></g><path d="M23 19.500h40M23 24.500h40M23 28.500h40" stroke="#ddd"/></svg></fieldset>
              <fieldset><legend>垂直</legend><label>间距:<input value="0.5"></label><svg class="thumb" viewBox="0 0 66 50"><g stroke="#00e62b" fill="none"><path d="M15 13.500h12M33 13.500h12M20 10.500v6l7-3zM41 10.500v6l-7-3zM27.500 10v8M32.500 10v8"/></g><path d="M27.500 19v29M32.500 19v29M37.500 19v29" stroke="#ddd"/></svg></fieldset>
            </div>
            <fieldset class="start"><legend>开始于:</legend>
              <label><input type="radio" name="from">元件（多导线）</label>
              <label><input type="radio" name="from">其他母线（多导线）</label>
              <label><input type="radio" name="from">空白区域，水平走向</label>
              <label><input type="radio" name="from" checked>空白区域，垂直走向</label>
              <div class="count"><input id="n" value="3"><label for="n">导线数</label><button type="button">2</button><button type="button">3</button><button type="button">4</button></div>
            </fieldset>
            <div class="actions"><button type="button" class="main">确定</button><button type="button">取消</button><button type="button" class="h">帮助(H)</button></div>
          </div>
        </form>
      </div>
      <div class="command">
        <div class="handle"><i></i><svg class="i small"><path d="M3 3l8 8M11 3l-8 8" stroke-width="2"/></svg><svg class="i small"><use href="#wrench"/></svg></div>
        <div class="lines">
          <p>命令:<br>命令:</p>
          <label><svg width="16" height="12"><path d="M.5.500h15v11H.5zM.5 2.500h15M3 4.500l2 2-2 2M7 9.500h4" fill="#eee" stroke="#777"/></svg><i class="caret"></i><input aria-label="命令行"></label>
        </div>
      </div>
    </div>
  </main>

  <footer class="status">
    <div class="grp"><button class="model">模型</button></div>
    <div class="grp"><button><svg class="i"><use href="#grid"/></svg></button><button class="car"><svg class="i"><use href="#dots"/></svg></button></div>
    <div class="grp"><button><svg class="i"><use href="#dyn"/></svg></button></div>
    <div class="grp"><button><svg class="i"><use href="#ortho"/></svg></button><button class="car"><svg class="i"><use href="#polar"/></svg></button><button class="car"><svg class="i"><use href="#iso"/></svg></button><button class="hot"><svg class="i"><use href="#angle"/></svg></button><button class="car"><svg class="i"><use href="#osnap"/></svg></button></div>
    <div class="grp last"><button class="hot"><svg class="i"><use href="#anno"/><circle cx="13" cy="4" r="2"/></svg></button><button><svg class="i"><use href="#anno"/><path d="M14 1l-3 4h3l-2 4"/></svg></button><button><svg class="i"><use href="#anno"/></svg></button><button class="scale">1:1<i class="caret"></i></button><button><svg class="i"><use href="#gear"/></svg></button><span class="spring"></span><button><svg class="i"><path d="M8 1v14M1 8h14"/></svg></button><button><svg class="i"><path d="M8 2l7 12H1z"/></svg></button><button><svg class="i"><use href="#cyl"/></svg></button><button><svg class="i"><use href="#ok"/></svg></button><button><svg class="i"><use href="#expand"/></svg></button><button><svg class="i"><path d="M1 3h14M1 8h14M1 13h14" stroke-width="2"/></svg></button></div>
  </footer>
</div>

<div class="taskbar">
  <button class="plain"><svg><use href="#win"/></svg></button><button><svg><use href="#browser"/></svg></button><button><svg><use href="#explorer"/></svg></button><button class="alert"><svg><use href="#wechat"/></svg></button><button><svg><use href="#vm"/></svg></button><button><svg><use href="#search"/></svg></button><button><svg><use href="#wps"/></svg></button><button class="current"><svg><use href="#acad"/></svg></button><button><svg><use href="#paint"/></svg></button>
  <div class="tray">
    <svg class="i"><path d="M2 14L7 2l2 5-3 7z" fill="#25a5b9" stroke="none"/><path d="M7 2h2l5 12h-4z" fill="#248cd7" stroke="none"/></svg>
    <svg class="i"><use href="#wechat"/></svg>
    <svg class="i"><path d="M4 12c-4 0-4-5 0-5 0-5 7-6 8-1 4 1 4 6 0 6-5 0-6-4-3-4s2 4-1 4z"/></svg>
    <svg class="i"><path d="M1 10V1h11v2M4 13V4h10v5"/><path d="M8 8l7 4-7 4z" fill="#27a827" stroke="none"/></svg>
    <svg class="i"><use href="#search"/></svg>
    <svg class="i"><circle cx="8" cy="8" r="7" fill="#79bf22" stroke="#ffd400" stroke-width="1.500"/><path d="M4 8h8M8 4v8" stroke="#ffe642" stroke-width="2.500"/></svg>
    <svg class="i"><path d="M8 0l7 3c0 6-2 10-7 13C3 13 1 9 1 3z" fill="#70b744" stroke="#e7f2dc"/><path d="M10 3L5 9h3l-1 4 5-6H8z" fill="#fff" stroke="none"/></svg>
    <svg class="i"><rect x="3" y="0" width="10" height="16" rx="4" fill="#1687e6" stroke="none"/><path d="M5 5l6 6-3 3V2l3 3-6 6" stroke="#fff"/></svg>
    <svg class="i"><rect width="16" height="16" rx="3" fill="#4aa9df" stroke="none"/><path d="M2 4h5M2 7h5M2 10h4M9 3h4v5H9M4 13h8" stroke="#fff"/><path d="M11 14l4-7" stroke="#f2c050" stroke-width="2"/></svg>
    <svg class="i"><path d="M5 5h10v7H6M2 1v4M5 1v3M1 5h5v3H4v5" /><path d="M8 7h5v3H8z" fill="#fff"/></svg>
    <svg class="i"><path d="M2 14C3 6 8 3 15 2M6 14c0-4 3-7 9-8M10 14c0-2 2-4 5-4" /><circle cx="14" cy="13" r="1"/></svg>
    <svg class="i"><path d="M1 6h3l4-4v12l-4-4H1zM10 6l5 5M15 6l-5 5"/></svg>
    <span class="ime">英</span>
    <svg class="i sogou"><path d="M1 2l14-1v12L2 15z" fill="#f04b23" stroke="none"/><path d="M12 4H7c-4 0-3 4 0 4h2c4 0 3 4 0 4H4" stroke="#fff" stroke-width="2"/></svg>
    <time><span>16:27</span><span>2021/8/14 星期六</span></time>
  </div>
</div>

<div class="watermark"><svg viewBox="0 0 24 24"><use href="#wechat"/></svg><span>老赵工控</span></div>
</body>
</html>
```
FILE: styles.css
```css
:root {
  --frame: #3b4453;
  --dark: #222a33;
  --head: #2c323e;
  --line: #242b36;
  --text: #e2e4e8;
  --muted: #6a727f;
  --bubble-a: #83d64b;
  --bubble-b: #eceeec;
}
* { box-sizing: border-box; }
body {
  margin: 0;
  min-height: 100vh;
  display: flex;
  flex-direction: column;
  background: linear-gradient(#3d5d9e, #3d5d9e) 0 0 / 70px 28px no-repeat, linear-gradient(90deg, #4a4a55 178px, #f4f4f4 178px, #f4f4f4 415px, #3f424e 415px) 0 0 / 100% 2px no-repeat, #e8e8e8;
  font: 11px/14px "Noto Sans", "Noto Sans CJK SC", sans-serif;
  color: var(--text);
  overflow: hidden;
}
button, input, select { font: inherit; color: inherit; margin: 0; padding: 0; border: 0; background: none; border-radius: 0; }
h1, h2, h3, p, ul { margin: 0; padding: 0; font-weight: 400; font-size: inherit; list-style: none; }
.sprite { display: none; }
.i { width: 16px; height: 16px; flex: none; fill: none; stroke: currentColor; display: block; }
.i.small { width: 14px; height: 14px; }
.i.tiny { width: 10px; height: 10px; }
.i.xl { width: 31px; height: 31px; }
.lit { color: #e4e4e4; }
.dim { color: #6b717b; }
.flip { transform: scaleX(-1); }
.caret { width: 0; height: 0; flex: none; border: 3px solid transparent; border-top-color: #c8cbd0; border-bottom: 0; }
.caret.dim { border-top-color: #777d86; }
.big-caret { border-width: 4px; border-bottom: 0; border-top-color: #e6e6e6; }

.app { flex: 1; display: flex; flex-direction: column; margin: 2px 2px 0; padding: 0 4px 4px; background: var(--frame); }

.top { display: flex; background: var(--dark); margin: 0 -1px; padding: 0 4px 0 1px; }
.logo { width: 37px; height: 37px; margin-top: 4px; background: linear-gradient(#d5d5d5, #777); border: 1px solid #111; display: grid; color: #111; }
.logo svg, .logo b { grid-area: 1 / 1; }
.logo svg { width: 35px; height: 35px; }
.logo b { align-self: end; font-size: 8px; line-height: 9px; }
.bars { flex: 1; }
.titlebar { display: flex; align-items: center; height: 28px; }
.titlebar button { display: flex; align-items: center; gap: 6px; }
.quick { display: flex; align-items: center; gap: 7px; padding-left: 8px; }
.quick .slim { margin: 0 2px 0 -2px; }
.custom { border-top: 2px solid #ddd; padding: 2px 1px; }
.titlebar .custom { border-top: 2px solid #ddd; margin-left: -4px; }
.titlebar h1 { flex: 1; display: flex; gap: 12px; justify-content: center; padding-right: 8px; font-size: 12px; white-space: nowrap; }
.titlebar h1 span + span { font-size: 11px; }
.info { display: flex; align-items: center; gap: 7px; }
.play { border: 3px solid transparent; border-left: 4px solid #ddd; border-right: 0; }
.find { width: 166px; height: 18px; background: #49536a; padding: 0 3px; font-style: italic; }
.find::placeholder { color: #b9bec9; opacity: 1; }
.login { margin-right: 50px; }
.info .helpbtn { border-left: 1px solid #3b4453; padding-left: 8px; }
.winctl { display: flex; gap: 7px; margin: 0 1px 0 62px; }
.tabs { display: flex; gap: 3px; height: 18px; padding-left: 6px; color: #c3c7cd; }
.tabs button { padding: 0 8px; white-space: nowrap; }
.tabs .on { background: var(--frame); color: #fff; }
.tabs .mini { display: flex; align-items: center; gap: 5px; padding-left: 25px; }

.ribbon { display: flex; gap: 1px; background: var(--dark); margin: 0 -1px; padding: 0 2px; }
.panel { background: var(--frame); height: 90px; display: flex; flex-direction: column; color: var(--muted); border-top: 1px solid #454d5b; }
.p1 { width: 250px; } .p2 { width: 161px; } .p3 { width: 136px; } .p4 { width: 231px; } .p5 { width: 219px; } .p6 { width: 104px; }
.tools { flex: 1; display: flex; padding: 4px 2px 0 4px; }
.big { width: 64px; flex: none; display: flex; flex-direction: column; align-items: center; line-height: 16px; white-space: nowrap; }
.big .xl { margin-bottom: 3px; }
.big .caret { margin-top: 3px; }
.big.wide { width: 80px; }
.big.narrow { width: 42px; }
.big.slim { width: 38px; }
.big.mid { width: 52px; }
.side { position: relative; }
.side::after { content: ""; position: absolute; right: 2px; top: 49px; border: 3px solid transparent; border-top-color: #c8cbd0; border-bottom: 0; }
.rows { display: flex; flex-direction: column; gap: 7px; padding-left: 4px; }
.rows > div { display: flex; }
.rows button { width: 23px; height: 16px; display: flex; align-items: center; flex: none; }
.rows .dd { width: 34px; }
.dd::after, .car::after { content: ""; margin-left: 6px; border: 3px solid transparent; border-top-color: #c8cbd0; border-bottom: 0; }
.rows .word { width: auto; gap: 4px; white-space: nowrap; }
.word .caret { margin-left: 4px; }
.p2 .tools { padding-left: 5px; }
.p3 .tools { padding-left: 0; }
.p3 .rows { padding-left: 1px; padding-top: 1px; }
.p4 .tools { padding-left: 3px; }
.p4 .rows { padding-left: 6px; }
.p5 .rows { padding-left: 5px; }
.p6 .rows { padding-left: 2px; padding-top: 1px; }
.cap { height: 16px; display: flex; align-items: center; justify-content: center; gap: 6px; color: #fff; }

.files { display: flex; align-items: stretch; height: 26px; margin: 0 -1px; padding: 6px 0 0 14px; background: var(--dark); }
.files button { width: 126px; background: #2d3440; border-radius: 10px 10px 0 0; display: flex; align-items: center; padding-left: 15px; color: #c3c7cd; }
.files .on { width: 114px; background: var(--frame); color: #fff; justify-content: space-between; padding: 0 10px; margin-left: -4px; }
.files .add { width: 24px; height: 14px; align-self: center; margin-left: 6px; padding-left: 7px; border-radius: 3px; }

main { flex: 1; display: flex; min-height: 0; padding-top: 4px; }
.dock { width: 140px; display: flex; flex-direction: column; margin: 2px 3px 3px 0; }
.wide-dock { width: 212px; margin-right: 0; }
.grip { height: 20px; border-radius: 3px; padding: 2px 0 0 13px; background: repeating-linear-gradient(#9aa0a8 0 1px, transparent 1px 3px) 6px 6px / 3px 9px no-repeat, var(--head); }
.stack { flex: 1; display: flex; flex-direction: column; border: 1px solid var(--line); margin-top: 2px; }
.dock h3 { height: 20px; flex: none; background: var(--head); border-bottom: 1px solid var(--line); display: flex; align-items: center; gap: 7px; padding: 0 5px 0 8px; font-weight: 700; color: #fff; }
.dock h3 .big-caret { margin-left: auto; }
.dock .mini-ic { width: 12px; height: 12px; color: #ddd; }
.dock h3 .mini-ic:first-of-type { margin-left: auto; }
.dock h3 .mini-ic ~ .big-caret { margin-left: 3px; }
.split { height: 8px; flex: none; background: var(--head); border: solid var(--line); border-width: 1px 0; }
.dotted { background: repeating-linear-gradient(90deg, #ddd 0 2px, transparent 2px 4px) 50% 2px / 18px 2px no-repeat, var(--head); }
.backup { height: 113px; padding: 1px 0 0 6px; overflow: hidden; white-space: nowrap; background: repeating-linear-gradient(#aeb4bd 0 1px, transparent 1px 2px) 27px 19px / 1px 30px no-repeat; }
.backup li { display: flex; align-items: center; height: 19px; gap: 2px; }
.backup span { padding: 0 2px; }
.backup .sel { background: #6c82a6; height: 18px; line-height: 18px; }
.backup .sub { padding-left: 21px; }
.backup .sub .stub { width: 9px; }
.fill { flex: 1; }
.preview { height: 82px; }
.box { width: 8px; height: 8px; flex: none; background: linear-gradient(#34588f, #34588f) 50% 50% / 6px 1px no-repeat, linear-gradient(#34588f, #34588f) 50% 50% / 1px 6px no-repeat, #f0f0f0; border: 1px solid #ccc; }
.box.minus { background: linear-gradient(#34588f, #34588f) 50% 50% / 6px 1px no-repeat, #f0f0f0; }
.stub { width: 4px; flex: none; border-bottom: 1px dotted #aeb4bd; }

.palette { flex: 1; display: flex; flex-direction: column; padding: 10px 8px 10px 7px; }
.ptools { display: flex; align-items: center; gap: 7px; height: 20px; padding-left: 3px; margin-right: -8px; overflow: hidden; }
.ptools button { width: 16px; flex: none; display: flex; justify-content: center; }
.ptools .big-caret { margin-left: -3px; }
.ptools .half { width: 8px; justify-content: flex-start; overflow: hidden; }
.palette .stack { margin: 5px 0 0; width: 197px; }
.combo { height: 18px; flex: none; margin-bottom: 2px; padding: 0 3px; appearance: none; border: 1px solid #596579; font-size: 12px; background: linear-gradient(to bottom right, #ddd 50%, #0000 50%) calc(100% - 3px) 6px / 4px 4px no-repeat, linear-gradient(to bottom left, #ddd 50%, #0000 50%) calc(100% - 7px) 6px / 4px 4px no-repeat, #4d586c; }
.projects { height: 133px; padding: 0 0 0 6px; font-size: 12px; background: repeating-linear-gradient(#aeb4bd 0 1px, transparent 1px 2px) 10px 17px / 1px 96px no-repeat; }
.projects li { display: flex; align-items: center; height: 21px; gap: 1px; }
.projects span, .projects b { margin-left: 3px; }
.projects .sub { padding-left: 20px; }
.projects .sub .stub { width: 10px; }
.projects .sub .sel { background: #eee; color: #000; padding: 3px 2px; height: 20px; font-size: 11px; margin-left: 1px; }
.details { flex: 1; display: flex; justify-content: space-between; line-height: 22px; min-height: 0; }
.details p { padding: 1px 0 0 3px; white-space: nowrap; }
.scroll { width: 15px; background: #f0f0f0; display: flex; flex-direction: column; }
.scroll i { flex: 1; margin: 0 1px; background: linear-gradient(#cacaca, #cacaca) 0 0 / 100% 47% no-repeat; }
.scroll svg { width: 15px; height: 15px; fill: none; stroke: #444; stroke-width: 2; }
.sidetabs { width: 20px; padding-top: 25px; display: flex; flex-direction: column; margin-right: 3px; }
.sidetabs button { height: 124px; background: var(--head); border: 1px solid var(--line); border-radius: 0 4px 4px 0; display: flex; align-items: center; justify-content: center; color: #b9bec7; }
.sidetabs .on { background: var(--frame); color: #fff; border-left: 0; }
.sidetabs span { writing-mode: vertical-rl; text-orientation: sideways; transform: rotate(180deg); }

.work { flex: 1; display: flex; flex-direction: column; min-width: 0; }
.canvas { flex: 1; position: relative; background: #212830; min-height: 420px; }
.drawing { position: absolute; inset: 0; width: 100%; height: 100%; }
.tag { font: 700 8px "Liberation Sans", sans-serif; fill: #fff45c; stroke: none; }
.viewlabel { padding: 6px 3px; color: #ddd; }
.mdi { position: absolute; right: 8px; top: 7px; display: flex; gap: 5px; color: #f2f2f2; }
.cube { position: absolute; right: 10px; top: 30px; width: 80px; display: flex; flex-direction: column; align-items: center; }
.cube > svg { width: 80px; height: 84px; }
.cube button { width: 45px; height: 16px; margin-top: 10px; background: #9296a3; border: 1px solid #b0b3bd; border-radius: 4px; color: #dedfe5; font: 11px/13px "Liberation Sans", sans-serif; }

.dialog { position: absolute; left: 309px; top: 72px; width: 314px; border: 1px solid #2386dd; background: #f0f0f0; color: #000; box-shadow: 0 3px 12px #0009; font: 11px/14px "Liberation Mono", "Noto Sans CJK SC", monospace; }
.dialog header { height: 28px; background: #fff; display: flex; align-items: center; justify-content: space-between; padding: 0 6px 0 7px; }
.dbody { padding: 2px 1px 6px 3px; }
.pair { display: flex; gap: 7px; padding: 0 4px; }
.dialog fieldset { margin: 0; min-width: 0; border: 1px solid #dcdcdc; padding: 0 7px 4px; }
.dialog legend { padding: 0 3px; margin-left: -3px; }
.pair fieldset { flex: 1; display: flex; justify-content: space-between; }
.pair label { width: 57px; padding-top: 7px; }
.dialog input { border: 1px solid #777; background: #fff; font-size: 10px; height: 17px; padding: 0 2px 2px; }
.pair input { display: block; width: 57px; margin-top: 6px; }
.thumb { width: 66px; height: 50px; background: #202830; border: 1px solid #999; margin-top: 5px; }
.dialog .start { padding: 0 4px 6px; margin-top: 3px; }
.start > label { display: flex; align-items: center; gap: 2px; height: 23px; }
.dialog input[type=radio] { appearance: none; width: 12px; height: 12px; padding: 0; border: 1px solid #444; border-radius: 50%; }
.dialog input[type=radio]:checked { background: radial-gradient(#222 0 3px, #fff 4px); }
.count { display: flex; align-items: center; gap: 10px; padding: 3px 0 0 7px; }
.count input { width: 29px; }
.count label { margin: 0 2px 0 -4px; }
.dialog .count button, .actions button { height: 18px; border: 1px solid #adadad; background: #e1e1e1; line-height: 14px; }
.count button { width: 31px; }
.actions { display: flex; gap: 28px; padding: 10px 0 0 41px; }
.actions button { width: 43px; }
.dialog .actions .main { width: 66px; border: 2px solid #0078d7; }
.actions .h { width: 60px; }

.command { display: flex; height: 57px; padding: 2px 0 0 3px; background: var(--frame); }
.handle { width: 20px; background: var(--head); display: flex; flex-direction: column; align-items: center; gap: 8px; padding-top: 4px; }
.handle i { width: 16px; height: 5px; background: repeating-linear-gradient(90deg, transparent 0 2px, var(--head) 2px 3px), repeating-linear-gradient(#ccc 0 2px, var(--head) 2px 3px); flex: none; margin-bottom: -3px; }
.lines { flex: 1; display: flex; flex-direction: column; color: #222; font: 12px/14px "Liberation Mono", "Noto Sans CJK SC", monospace; }
.lines p { height: 35px; background: #c8c8c8; border-bottom: 1px solid #888; padding: 5px 3px 0; margin-top: 1px; }
.lines label { flex: 1; display: flex; align-items: center; background: #fff; padding-left: 4px; gap: 3px; }
.lines label .caret { border-top-color: #555; }
.lines input { flex: 1; }

.status { display: flex; justify-content: flex-end; gap: 3px; background: var(--dark); height: 26px; padding: 2px 0; margin-top: 2px; }
.grp { display: flex; align-items: stretch; background: var(--frame); color: #c6c9cd; }
.grp button { width: 22px; display: flex; align-items: center; justify-content: center; flex: none; }
.grp .model { width: 25px; color: #fff; }
.grp .car { width: 37px; }
.grp .car::after { margin-left: 7px; }
.grp .hot { background: #5b8cc6; color: #fff; }
.grp .scale { width: 38px; gap: 4px; }
.last { width: 284px; }
.last button { width: 23px; }
.spring { flex: 1; }

.taskbar { display: flex; height: 37px; flex: none; background: linear-gradient(90deg, #0d0a08, #050507 50%, #050d1c 75%, #071428); }
.taskbar > button { width: 46px; display: flex; align-items: center; justify-content: center; background: linear-gradient(#76b9ed, #76b9ed) 50% 100% / 38px 2px no-repeat; }
.taskbar > button.plain { background: none; }
.taskbar > button.alert { background: #9f561e; border-bottom: 2px solid #ff7f1a; }
.taskbar > button.current { background: #3b3a3c; border-bottom: 2px solid #76b9ed; }
.taskbar > button svg { width: 22px; height: 22px; fill: none; stroke: #fff; }
.tray { margin-left: auto; display: flex; align-items: center; gap: 7px; padding-right: 10px; color: #fff; }
.tray .i { width: 15px; height: 15px; }
.tray .i:not(.sogou) { overflow: visible; }
.tray .sogou { margin: 0 8px 0 5px; }
.ime { width: 16px; font-size: 12px; text-align: center; }
.tray time { display: flex; flex-direction: column; align-items: center; line-height: 18px; white-space: nowrap; }

.watermark { --bubble-a: #f4f4f4; --bubble-b: #fff; position: absolute; right: 42px; bottom: 36px; display: flex; align-items: center; gap: 7px; font: 32px/46px "Noto Sans CJK SC", sans-serif; color: #fff; text-shadow: 1px 1px 1px #333; }
.watermark svg { width: 51px; height: 50px; filter: drop-shadow(0 0 1px #333); }
```
